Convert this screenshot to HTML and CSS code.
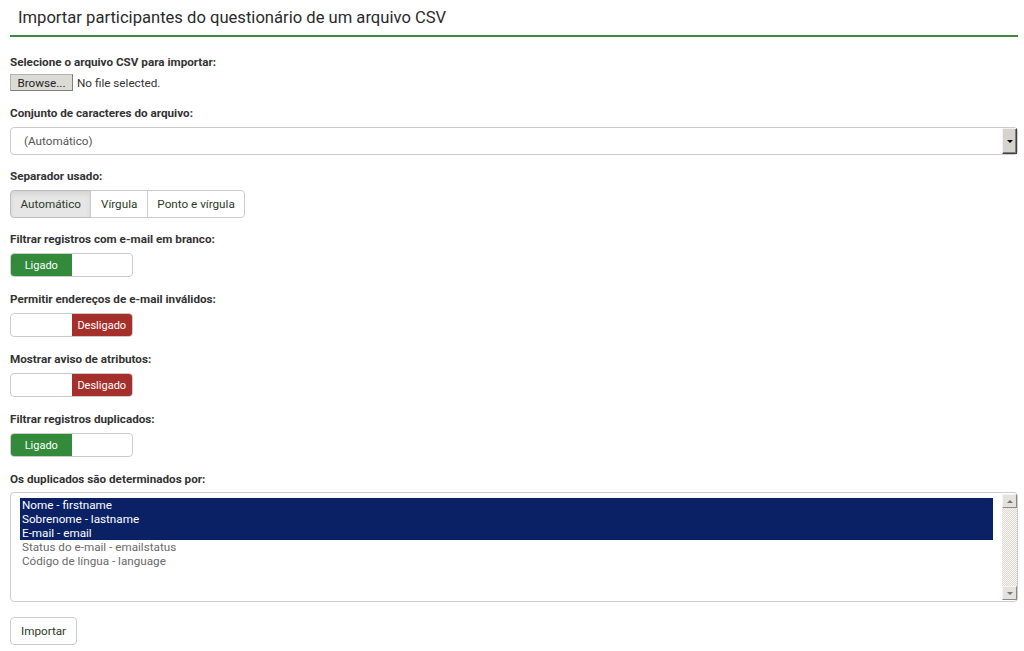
FILE: index.html
```html
<!DOCTYPE html>
<html lang="pt">
<head>
<meta charset="utf-8">
<title>Importar participantes</title>
<link rel="stylesheet" href="styles.css">
</head>
<body>
<div class="page">
  <h3 class="title">Importar participantes do questionário de um arquivo CSV</h3>
  <form class="form">
    <div class="group g-file">
      <label class="lbl">Selecione o arquivo CSV para importar:</label>
      <div class="file-row"><span class="browse">Browse...</span><span class="file-text">No file selected.</span></div>
    </div>
    <div class="group g-tight">
      <label class="lbl">Conjunto de caracteres do arquivo:</label>
      <div class="select"><span class="select-val">(Automático)</span><span class="select-btn"><span class="tri-down"></span></span></div>
    </div>
    <div class="group g-tight">
      <label class="lbl">Separador usado:</label>
      <div class="btn-group">
        <span class="seg active">Automático</span><span class="seg">Vírgula</span><span class="seg">Ponto e vírgula</span>
      </div>
    </div>
    <div class="group">
      <label class="lbl">Filtrar registros com e-mail em branco:</label>
      <div class="toggle"><span class="half on">Ligado</span><span class="half"></span></div>
    </div>
    <div class="group">
      <label class="lbl">Permitir endereços de e-mail inválidos:</label>
      <div class="toggle"><span class="half"></span><span class="half off">Desligado</span></div>
    </div>
    <div class="group">
      <label class="lbl">Mostrar aviso de atributos:</label>
      <div class="toggle"><span class="half"></span><span class="half off">Desligado</span></div>
    </div>
    <div class="group">
      <label class="lbl">Filtrar registros duplicados:</label>
      <div class="toggle"><span class="half on">Ligado</span><span class="half"></span></div>
    </div>
    <div class="group g-list">
      <label class="lbl">Os duplicados são determinados por:</label>
      <div class="listbox">
        <div class="options">
          <div class="opt sel">Nome - firstname</div>
          <div class="opt sel">Sobrenome - lastname</div>
          <div class="opt sel">E-mail - email</div>
          <div class="opt">Status do e-mail - emailstatus</div>
          <div class="opt">Código de língua - language</div>
        </div>
        <div class="scrollbar">
          <span class="sb-btn"><span class="tri-up"></span></span>
          <span class="sb-track"></span>
          <span class="sb-btn"><span class="tri-down small"></span></span>
        </div>
      </div>
    </div>
    <div class="actions"><span class="btn">Importar</span></div>
  </form>
</div>
</body>
</html>
```
FILE: styles.css
```css
* { box-sizing: border-box; }
html, body { margin: 0; padding: 0; background: #fff; }
body { font-family: Roboto, "Liberation Sans", Arial, sans-serif; color: #333; font-size: 11.7px; }
.page { padding: 0 6px 0 10px; }
.title {
  margin: 0;
  padding: 8px 8px 7px;
  font-size: 16.6px;
  line-height: 20px;
  font-weight: 400;
  color: #2b2b2b;
  border-bottom: 2px solid #3c8a3f;
}
.form { padding-top: 17px; }
.group { margin-bottom: 14px; }
.g-tight { margin-bottom: 13px; }
.g-list { margin-bottom: 15px; }
.g-list .lbl { margin-bottom: 4px; }
.lbl { display: block; font-weight: 700; line-height: 17px; margin-bottom: 5px; color: #333; }
.g-file .lbl { margin-bottom: 3px; }
.g-file { margin-bottom: 14px; }
.file-row { display: flex; align-items: center; height: 17px; }
.browse {
  display: inline-flex; align-items: center; justify-content: center;
  width: 63px; height: 17px;
  background: #dcdad5;
  border: 1px solid #b4b2ad;
  border-right-color: #7f7e7a; border-bottom-color: #7f7e7a;
  color: #222;
}
.file-text { margin-left: 4px; color: #333; }
.select {
  display: flex; align-items: center;
  height: 28px;
  border: 1px solid #ccc; border-radius: 4px;
  padding-left: 13px;
}
.select-val { flex: 1; color: #555; }
.select-btn {
  width: 15px; height: 26px;
  background: #d6d3ce;
  border: 1px solid #f4f3f0; border-right-color: #404040; border-bottom-color: #404040;
  box-shadow: inset -1px -1px 0 #808080;
  display: flex; align-items: center; justify-content: center;
}
.tri-down { width: 0; height: 0; border-left: 3px solid transparent; border-right: 3px solid transparent; border-top: 3px solid #000; }
.tri-up { width: 0; height: 0; border-left: 3px solid transparent; border-right: 3px solid transparent; border-bottom: 3px solid #777; }
.tri-down.small { border-top-color: #777; }
.btn-group { display: inline-flex; }
.seg {
  display: inline-flex; align-items: center;
  height: 28px; padding: 0 9.5px;
  border: 1px solid #ccc; margin-left: -1px;
  background: #fff; color: #2e3a26;
}
.seg:first-child { margin-left: 0; border-radius: 4px 0 0 4px; }
.seg:last-child { border-radius: 0 4px 4px 0; }
.seg.active { background: #e6e6e6; border-color: #bdbdbd; box-shadow: inset 0 3px 5px rgba(0,0,0,0.08); }
.toggle {
  display: flex; width: 123px; height: 24px;
  border: 1px solid #ccc; border-radius: 4px; overflow: hidden;
}
.half { flex: 1; display: flex; align-items: center; justify-content: center; font-size: 11px; color: #fff; }
.half.on { background: #328a3a; }
.half.off { background: #a52f2b; }
.listbox {
  display: flex; height: 110px;
  border: 1px solid #ccc; border-radius: 4px;
}
.options { flex: 1; padding: 5px 9px 0 9px; }
.opt { line-height: 14px; padding-left: 2px; color: #6a6a6a; }
.opt.sel { background: #0a2265; color: #fff; }
.scrollbar { width: 15px; margin: 1px 0; display: flex; flex-direction: column; }
.sb-btn {
  height: 14px; background: #e4e2dd;
  border: 1px solid #f6f5f3; border-right-color: #8a8986; border-bottom-color: #8a8986;
  display: flex; align-items: center; justify-content: center;
}
.sb-track {
  flex: 1;
  background-color: #f3f2ef;
  background-image: repeating-conic-gradient(#dcdad5 0 25%, #f6f5f2 0 50%);
  background-size: 2px 2px;
}
.btn {
  display: inline-flex; align-items: center; justify-content: center;
  height: 28px; padding: 0 10px;
  border: 1px solid #ccc; border-radius: 4px;
  color: #2e3a26; background: #fff;
}
```
